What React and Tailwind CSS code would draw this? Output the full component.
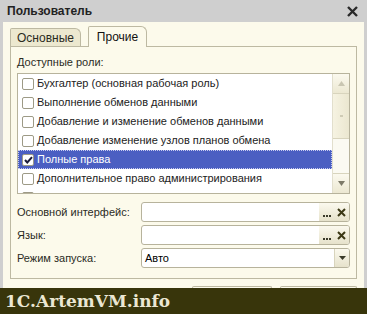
import React from 'react';

const roles = [
    { name: 'Бухгалтер (основная рабочая роль)', checked: false },
    { name: 'Выполнение обменов данными', checked: false },
    { name: 'Добавление и изменение обменов данными', checked: false },
    { name: 'Добавление изменение узлов планов обмена', checked: false },
    { name: 'Полные права', checked: true, selected: true },
    { name: 'Дополнительное право администрирования', checked: false },
    { name: 'Право администрирования', checked: false },
];

const Check = ({ checked }) => (
    <span className="w-[12px] h-[12px] shrink-0 rounded-[2px] border border-[#9d9a86] bg-white flex items-center justify-center">
        {checked && (
            <svg width="9" height="8" viewBox="0 0 9 8">
                <path d="M1 4 L3.3 6.5 L8 1.2" fill="none" stroke="#1c1c3a" strokeWidth="2" />
            </svg>
        )}
    </span>
);

const Field = ({ label, value, kind }) => (
    <div className="flex items-center h-[20px]">
        <span className="w-[124px] text-[#2b2b1e]">{label}</span>
        <div className="flex-1 h-[20px] flex rounded-[3px] border border-[#b7b39c] bg-white overflow-hidden">
            <div className="flex-1 px-[3px] flex items-center text-black">{value}</div>
            {kind === 'select' ? (
                <div className="w-[15px] bg-gradient-to-b from-[#fbf9ee] to-[#e6e2cb] border-l border-[#d8d4bd] flex items-center justify-center">
                    <svg width="7" height="4" viewBox="0 0 7 4"><path d="M0 0 H7 L3.5 4 Z" fill="#3a3a2a" /></svg>
                </div>
            ) : (
                <>
                    <div className="w-[15px] bg-gradient-to-b from-[#fbf9ee] to-[#e6e2cb] flex items-end justify-center pb-[4px] gap-[1px]">
                        <span className="w-[2px] h-[2px] bg-[#3a3a2a]" />
                        <span className="w-[2px] h-[2px] bg-[#3a3a2a]" />
                        <span className="w-[2px] h-[2px] bg-[#3a3a2a]" />
                    </div>
                    <div className="w-[15px] bg-gradient-to-b from-[#fbf9ee] to-[#e6e2cb] flex items-center justify-center">
                        <svg width="9" height="9" viewBox="0 0 9 9"><path d="M1 1 L8 8 M8 1 L1 8" stroke="#3b3815" strokeWidth="2" /></svg>
                    </div>
                </>
            )}
        </div>
    </div>
);

export default function App() {
    return (
        <div className="w-[367px] h-[314px] flex flex-col bg-[#cfcfcf] overflow-hidden text-[11px] leading-none" style={{ fontFamily: '"Liberation Sans", Arial, sans-serif' }}>
            <div className="h-[22px] shrink-0 flex items-center justify-between pl-[7px] pr-[9px]">
                <span className="font-bold text-[12px] text-[#222]">Пользователь</span>
                <svg width="11" height="11" viewBox="0 0 11 11"><path d="M1 1 L10 10 M10 1 L1 10" stroke="#2a2a2a" strokeWidth="2.4" /></svg>
            </div>
            <div className="flex-1 mx-[3px] bg-[#fcfaeb] px-[7px] pt-[4px] flex flex-col">
                <div className="flex items-end h-[21px] relative z-10">
                    <div className="w-[71px] h-[18px] mb-[1px] rounded-tr-[6px] rounded-tl-[2px] border border-b-0 border-[#bdb9a2] bg-[#ece8cf] flex items-center justify-center text-[#2b2b1e] text-[12px]">Основные</div>
                    <div className="w-[59px] h-[21px] ml-[7px] rounded-tr-[6px] rounded-tl-[2px] border border-b-0 border-[#bdb9a2] bg-[#fcfaeb] flex items-center justify-center text-[#111] text-[12px]">Прочие</div>
                </div>
                <div className="h-[233px] -mt-[1px] border border-[#bdb9a2] px-[6px] pt-[10px] flex flex-col">
                    <div className="text-[#2b2b1e] h-[16px]">Доступные роли:</div>
                    <div className="h-[121px] border border-[#b7b39c] bg-white flex overflow-hidden">
                        <div className="flex-1 flex flex-col">
                            {roles.map((r) => (
                                <div
                                    key={r.name}
                                    className={`h-[19px] shrink-0 flex items-center gap-[3px] pl-[4px] ${r.selected ? 'bg-[#4b5fc2] text-white outline outline-1 outline-dotted outline-[#c9cdf0] -outline-offset-1' : 'text-[#222]'}`}
                                >
                                    <Check checked={r.checked} />
                                    <span>{r.name}</span>
                                </div>
                            ))}
                        </div>
                        <div className="w-[17px] border-l border-[#e2dfcd] bg-[#fbfaf2] flex flex-col">
                            <div className="h-[20px] border-b border-[#d8d4bd] bg-gradient-to-b from-[#fbf9ee] to-[#ece8d2] flex items-center justify-center">
                                <svg width="7" height="5" viewBox="0 0 7 5"><path d="M0 5 H7 L3.5 0 Z" fill="#c9c6b2" /></svg>
                            </div>
                            <div className="h-[45px] border-b border-[#d8d4bd] bg-gradient-to-r from-[#f6f3e2] to-[#ebe7d0] flex items-center justify-center">
                                <div className="w-[3px] h-[2px] bg-[#cfcbb5]" />
                            </div>
                            <div className="flex-1" />
                            <div className="h-[20px] border-t border-[#d8d4bd] bg-gradient-to-b from-[#fbf9ee] to-[#ece8d2] flex items-center justify-center">
                                <svg width="7" height="5" viewBox="0 0 7 5"><path d="M0 0 H7 L3.5 5 Z" fill="#7d7a69" /></svg>
                            </div>
                        </div>
                    </div>
                    <div className="mt-[8px] flex flex-col gap-[3px]">
                        <Field label="Основной интерфейс:" kind="pick" />
                        <Field label="Язык:" kind="pick" />
                        <Field label="Режим запуска:" value="Авто" kind="select" />
                    </div>
                </div>
                <div className="flex-1 flex items-end gap-[8px] pl-[182px]">
                    <div className="w-[84px] h-[2px] rounded-t-[3px] border-t border-x border-[#bdb9a2]" />
                    <div className="w-[80px] h-[2px] rounded-t-[3px] border-t border-x border-[#bdb9a2]" />
                </div>
            </div>
            <div className="h-[26px] shrink-0 bg-[#38350b] flex items-center pl-[5px]">
                <span className="text-[17px] font-bold text-[#ebe7d3]" style={{ fontFamily: '"DejaVu Serif", serif' }}>1C.ArtemVM.info</span>
            </div>
        </div>
    );
}
